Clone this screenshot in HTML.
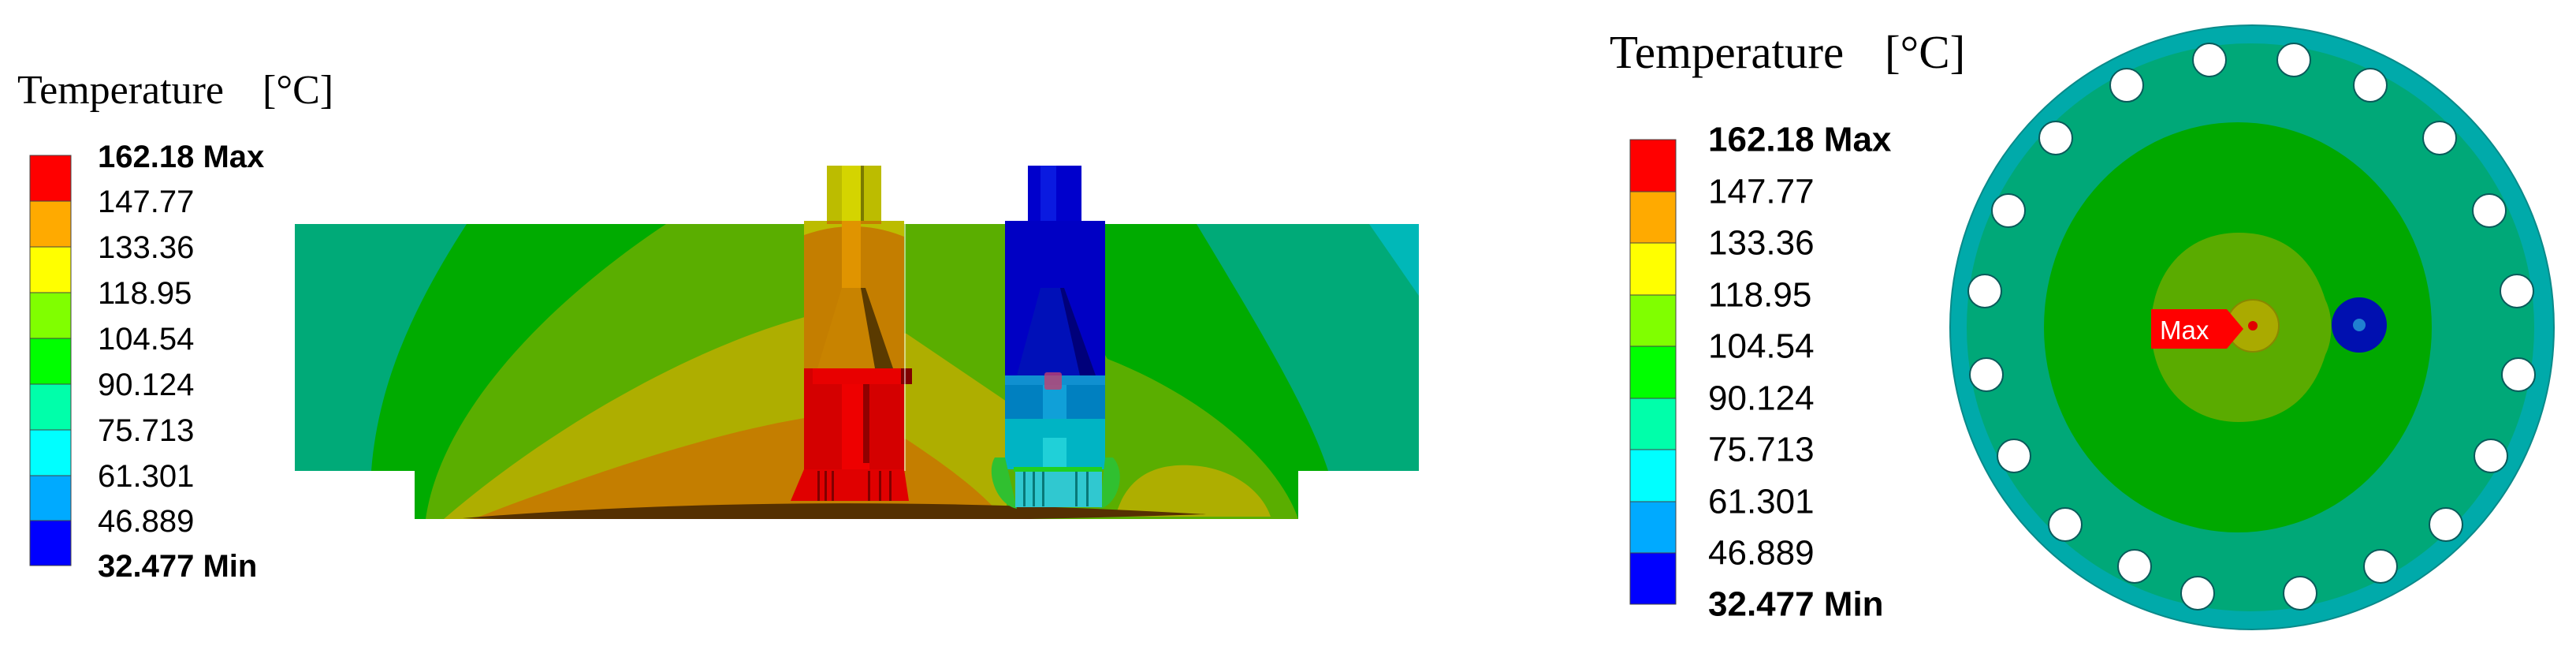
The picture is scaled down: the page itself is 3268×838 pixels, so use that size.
<!DOCTYPE html>
<html><head><meta charset="utf-8"><style>
html,body{margin:0;padding:0;background:#fff;}
svg{display:block;}
</style></head><body>
<svg width="3268" height="838" viewBox="0 0 3268 838" xmlns="http://www.w3.org/2000/svg">
<defs><clipPath id="body"><path d="M374,284 L1800,284 L1800,597 L1647,597 L1647,658 L526,658 L526,597 L374,597 Z"/></clipPath></defs>
<!-- LEFT LEGEND -->
<text x="22" y="131" font-family="Liberation Serif, serif" font-size="52" fill="#000">Temperature</text>
<text x="333" y="131" font-family="Liberation Serif, serif" font-size="52" fill="#000">[°C]</text>
<g stroke="#444" stroke-width="1">
<rect x="38" y="197" width="52" height="58" fill="#ff0000"/>
<rect x="38" y="255" width="52" height="58" fill="#ffaa00"/>
<rect x="38" y="313" width="52" height="58" fill="#ffff00"/>
<rect x="38" y="371" width="52" height="58" fill="#80ff00"/>
<rect x="38" y="429" width="52" height="58" fill="#00ff00"/>
<rect x="38" y="487" width="52" height="58" fill="#00ffaa"/>
<rect x="38" y="545" width="52" height="58" fill="#00ffff"/>
<rect x="38" y="603" width="52" height="57" fill="#00aaff"/>
<rect x="38" y="660" width="52" height="57" fill="#0000ff"/>
</g>
<g font-family="Liberation Sans, sans-serif" font-size="40" fill="#000" dominant-baseline="central">
<text x="124" y="199" font-weight="bold">162.18 Max</text>
<text x="124" y="256">147.77</text>
<text x="124" y="314">133.36</text>
<text x="124" y="372">118.95</text>
<text x="124" y="430">104.54</text>
<text x="124" y="488">90.124</text>
<text x="124" y="546">75.713</text>
<text x="124" y="604">61.301</text>
<text x="124" y="661">46.889</text>
<text x="124" y="718" font-weight="bold">32.477 Min</text>
</g>

<!-- LEFT MODEL -->
<g clip-path="url(#body)">
<rect x="374" y="284" width="1426" height="380" fill="#00aa78"/>
<path d="M1737,284 L1800,284 L1800,375 Z" fill="#00b8b8"/>
<path d="M592,284 L1518,284 C1600,420 1660,520 1685,597 L1647,597 L1647,658 L526,658 L526,597 L471,597 C480,480 530,380 592,284 Z" fill="#00ab00"/>
<path d="M845,284 L1300,284 L1405,455 C1520,500 1620,580 1647,658 L540,658 C560,520 700,380 845,284 Z" fill="#5aae00"/>
<path d="M1021,402 L1150,423 L1277,509 L1277,658 L563,658 C700,540 880,440 1021,402 Z" fill="#aeae00"/>
<path d="M1415,655 C1430,600 1470,588 1510,590 C1560,592 1600,620 1612,655 Z" fill="#aeae00"/>
<path d="M1021,530 L1150,557 C1200,590 1240,620 1265,648 L600,658 C750,600 900,550 1021,530Z" fill="#c47e00"/>
<path d="M587,657 Q1010,622 1530,652 Q1050,668 587,657 Z" fill="#553000"/>
</g>
<!-- yellow/orange/red tube -->
<rect x="1049" y="210" width="69" height="72" fill="#bcbc00"/>
<rect x="1068" y="210" width="24" height="72" fill="#d4d400"/>
<rect x="1092" y="210" width="4" height="72" fill="#7a7a00"/>
<rect x="1020" y="280" width="127" height="187" fill="#c47e00"/>
<path d="M1020,280 L1049,280 L1049,284 L1118,284 L1118,280 L1147,280 L1147,300 Q1085,275 1020,298Z" fill="#bcbc00"/>
<rect x="1068" y="280" width="24" height="85" fill="#e09400"/>
<path d="M1068,365 L1098,365 L1133,467 L1037,467 Z" fill="#c88300"/>
<path d="M1098,365 L1133,467 L1110,467 L1092,365Z" fill="#5a3a00"/>
<rect x="1020" y="467" width="127" height="130" fill="#d40000"/>
<rect x="1031" y="467" width="126" height="20" fill="#e80000"/>
<rect x="1143" y="467" width="14" height="20" fill="#800000"/>
<rect x="1068" y="487" width="35" height="110" fill="#ee0000"/>
<rect x="1095" y="487" width="8" height="100" fill="#900000"/>
<path d="M1020,595 L1147,595 L1153,635 L1003,635 Z" fill="#e00000"/>
<g fill="#800000"><rect x="1037" y="597" width="3" height="38"/><rect x="1046" y="597" width="3" height="38"/><rect x="1055" y="597" width="3" height="38"/><rect x="1101" y="597" width="3" height="38"/><rect x="1115" y="597" width="3" height="38"/><rect x="1128" y="597" width="3" height="38"/></g>
<!-- blue tube -->
<rect x="1304" y="210" width="68" height="72" fill="#0000cc"/>
<rect x="1320" y="210" width="20" height="72" fill="#0a1ae0"/>
<rect x="1275" y="280" width="127" height="196" fill="#0000c4"/>
<path d="M1320,365 L1350,365 L1390,476 L1290,476Z" fill="#0010b8"/>
<path d="M1350,365 L1390,476 L1370,476 L1345,365Z" fill="#00007a"/>
<rect x="1275" y="476" width="127" height="55" fill="#0080c0"/>
<rect x="1275" y="476" width="127" height="12" fill="#1090d0"/>
<rect x="1323" y="488" width="30" height="102" fill="#10a0d8"/>
<path d="M1275,531 L1402,531 L1402,595 L1275,595Z" fill="#00b4c4"/>
<rect x="1323" y="555" width="30" height="37" fill="#20d0d8"/>
<path d="M1262,580 C1250,600 1265,640 1290,645 L1275,580Z" fill="#30c030"/>
<path d="M1412,580 C1430,600 1418,640 1395,645 L1402,580Z" fill="#30c030"/>
<rect x="1286" y="592" width="112" height="6" fill="#20d020"/>
<rect x="1288" y="598" width="110" height="45" fill="#30c8d0"/>
<g fill="#087878"><rect x="1298" y="598" width="3" height="44"/><rect x="1310" y="598" width="3" height="44"/><rect x="1322" y="598" width="3" height="44"/><rect x="1364" y="598" width="3" height="44"/><rect x="1378" y="598" width="3" height="44"/></g>
<rect x="1325" y="472" width="22" height="22" rx="3" fill="#c04070" opacity="0.8"/>
<rect x="1147" y="284" width="2" height="313" fill="#ffffff" opacity="0.5"/>

<!-- RIGHT LEGEND -->
<text x="2042" y="86" font-family="Liberation Serif, serif" font-size="59" fill="#000">Temperature</text>
<text x="2391" y="86" font-family="Liberation Serif, serif" font-size="59" fill="#000">[°C]</text>
<g stroke="#444" stroke-width="1">
<rect x="2068" y="177" width="58" height="66" fill="#ff0000"/>
<rect x="2068" y="243" width="58" height="65" fill="#ffaa00"/>
<rect x="2068" y="308" width="58" height="66" fill="#ffff00"/>
<rect x="2068" y="374" width="58" height="65" fill="#80ff00"/>
<rect x="2068" y="439" width="58" height="66" fill="#00ff00"/>
<rect x="2068" y="505" width="58" height="65" fill="#00ffaa"/>
<rect x="2068" y="570" width="58" height="66" fill="#00ffff"/>
<rect x="2068" y="636" width="58" height="65" fill="#00aaff"/>
<rect x="2068" y="701" width="58" height="65" fill="#0000ff"/>
</g>
<g font-family="Liberation Sans, sans-serif" font-size="44" fill="#000" dominant-baseline="central">
<text x="2167" y="177" font-weight="bold">162.18 Max</text>
<text x="2167" y="243">147.77</text>
<text x="2167" y="308">133.36</text>
<text x="2167" y="374">118.95</text>
<text x="2167" y="439">104.54</text>
<text x="2167" y="505">90.124</text>
<text x="2167" y="570">75.713</text>
<text x="2167" y="636">61.301</text>
<text x="2167" y="701">46.889</text>
<text x="2167" y="766" font-weight="bold">32.477 Min</text>
</g>

<!-- RIGHT DISC -->
<circle cx="2857" cy="415" r="383" fill="#00aaaa" stroke="#0a8a8a" stroke-width="2"/>
<circle cx="2855" cy="415" r="360" fill="#00a878"/>
<ellipse cx="2839" cy="415" rx="246" ry="260" fill="#00a800"/>
<path d="M2840,295 C2900,295 2935,330 2950,380 C2960,400 2960,430 2950,450 C2935,500 2900,535 2840,535 C2770,535 2729,480 2729,415 C2729,350 2770,295 2840,295Z" fill="#5aab00"/>
<g fill="#fff" stroke="#0a5a5a" stroke-width="2">
<circle cx="2803" cy="76" r="21"/><circle cx="2910" cy="76" r="21"/>
<circle cx="2698" cy="108" r="21"/><circle cx="3007" cy="108" r="21"/>
<circle cx="2608" cy="175" r="21"/><circle cx="3095" cy="175" r="21"/>
<circle cx="2548" cy="267" r="21"/><circle cx="3158" cy="267" r="21"/>
<circle cx="2518" cy="369" r="21"/><circle cx="3193" cy="369" r="21"/>
<circle cx="2520" cy="475" r="21"/><circle cx="3195" cy="475" r="21"/>
<circle cx="2555" cy="578" r="21"/><circle cx="3160" cy="578" r="21"/>
<circle cx="2620" cy="665" r="21"/><circle cx="3103" cy="665" r="21"/>
<circle cx="2708" cy="718" r="21"/><circle cx="3020" cy="718" r="21"/>
<circle cx="2788" cy="752" r="21"/><circle cx="2918" cy="752" r="21"/>
</g>
<circle cx="2858" cy="413" r="33" fill="#aaaa00" stroke="#888800" stroke-width="2"/>
<circle cx="2858" cy="413" r="6" fill="#e00000"/>
<circle cx="2993" cy="412" r="35" fill="#0010b0"/>
<circle cx="2993" cy="412" r="8" fill="#2080d0"/>
<polygon points="2729,392 2825,392 2846,417 2825,442 2729,442" fill="#ff0000"/>
<text x="2740" y="430" font-family="Liberation Sans, sans-serif" font-size="33" fill="#fff">Max</text>
</svg>
</body></html>
